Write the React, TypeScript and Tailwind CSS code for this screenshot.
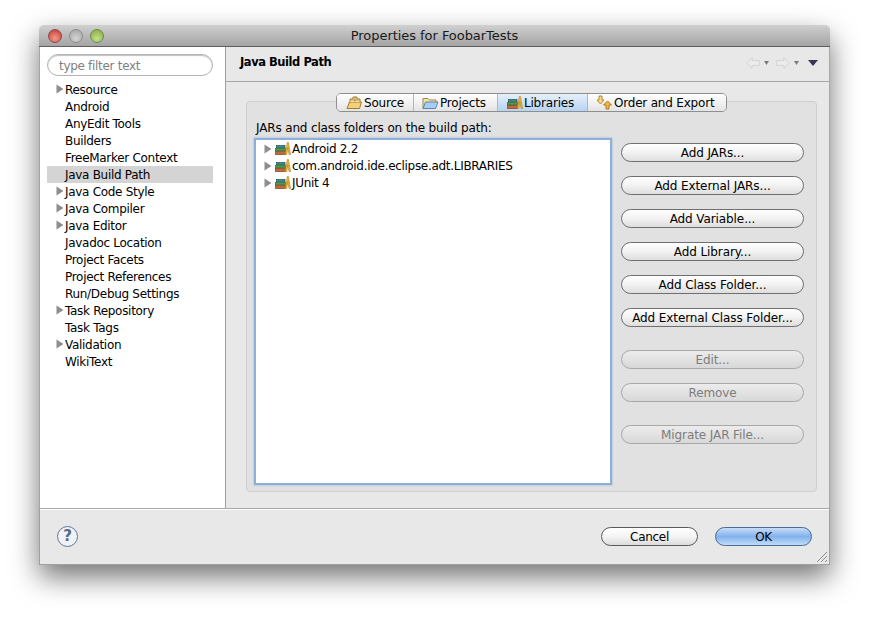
import React from 'react';

const sidebarItems = [
  { label: 'Resource', arrow: true },
  { label: 'Android' },
  { label: 'AnyEdit Tools' },
  { label: 'Builders' },
  { label: 'FreeMarker Context' },
  { label: 'Java Build Path', selected: true },
  { label: 'Java Code Style', arrow: true },
  { label: 'Java Compiler', arrow: true },
  { label: 'Java Editor', arrow: true },
  { label: 'Javadoc Location' },
  { label: 'Project Facets' },
  { label: 'Project References' },
  { label: 'Run/Debug Settings' },
  { label: 'Task Repository', arrow: true },
  { label: 'Task Tags' },
  { label: 'Validation', arrow: true },
  { label: 'WikiText' },
];

const Arrow = () => (
  <svg width="8" height="10" viewBox="0 0 8 10" className="shrink-0">
    <path d="M0.5 0.5 L7.5 5 L0.5 9.5 Z" fill="#8e8e8e" />
  </svg>
);

// stack of books with the yellow ruler leaning on it
const LibIcon = () => (
  <svg width="16" height="13" viewBox="0 0 16 13" className="shrink-0">
    <rect x="1.5" y="3.5" width="8.5" height="2.5" fill="#3f8a8f" stroke="#25505a" strokeWidth="0.7" />
    <rect x="0.5" y="6.5" width="10" height="2.5" fill="#4f9a48" stroke="#2e6e30" strokeWidth="0.7" />
    <rect x="0.5" y="9.5" width="10" height="3" fill="#c0693c" stroke="#80401f" strokeWidth="0.7" />
    <path d="M10.2 12.5 L12.3 0.5 L13.4 0.5 L15.6 12.5 L14 12.5 L12.8 5.5 L11.8 12.5 Z" fill="#f0c040" stroke="#a87a18" strokeWidth="0.6" />
  </svg>
);

const SourceIcon = () => (
  <svg width="17" height="14" viewBox="0 0 17 14" className="shrink-0">
    <path d="M1 12.5 L3.5 6 L15.5 6 L13.5 12.5 Z" fill="#f4d27a" stroke="#a47a2a" />
    <path d="M4 6 V3 H7 V1 H11 V3 H14 V6" fill="#f8e6b0" stroke="#a47a2a" />
    <path d="M9 1 V6 M5 4 H13" stroke="#a47a2a" strokeWidth="0.7" />
  </svg>
);

const FolderIcon = () => (
  <svg width="17" height="14" viewBox="0 0 17 14" className="shrink-0">
    <path d="M1 12.5 V2.5 H6 L7.5 4 H14 V6" fill="#f6e3a8" stroke="#9a8a50" />
    <path d="M1 12.5 L3.5 6 H16 L13.5 12.5 Z" fill="#a9cdee" stroke="#5a86b0" />
  </svg>
);

const OrderIcon = () => (
  <svg width="17" height="15" viewBox="0 0 17 15" className="shrink-0">
    <path d="M3 1 H6 V5 H8 L4.5 9 L1 5 H3 Z" fill="#f6dc8a" stroke="#b08a2a" />
    <path d="M10 14 H13 V10 H15.5 L11.5 6 L7.5 10 H10 Z" fill="#f2b44c" stroke="#b07a1a" />
  </svg>
);

const NavArrow = ({ flip }: { flip?: boolean }) => (
  <svg width="14" height="12" viewBox="0 0 14 12" className={flip ? 'rotate-180' : ''}>
    <path d="M0.7 6 L6 0.7 V3.5 H13.3 V8.5 H6 V11.3 Z" fill="#ececec" stroke="#d4d4d4" />
  </svg>
);

const SmallCaret = () => (
  <svg width="5" height="4" viewBox="0 0 5 4">
    <path d="M0 0 H5 L2.5 4 Z" fill="#7c7c7c" />
  </svg>
);

const Tab = ({ icon, label, className }: { icon: React.ReactNode; label: string; className: string }) => (
  <div className={`h-full shrink-0 flex items-center gap-px ${className}`}>
    {icon}
    <span className="tracking-[-0.2px]">{label}</span>
  </div>
);

const Button = ({ label, disabled, className = '' }: { label: string; disabled?: boolean; className?: string }) => (
  <div
    className={`w-[183px] h-[19px] shrink-0 rounded-full border flex items-center justify-center tracking-[-0.1px] ${
      disabled
        ? 'border-[#a8a8a8] bg-gradient-to-b from-[#ececec] to-[#d8d8d8] text-[#7d7d7d]'
        : 'border-[#6f6f6f] bg-gradient-to-b from-white via-[#f2f2f2] to-[#dedede] text-black'
    } ${className}`}
  >
    {label}
  </div>
);

const App = () => {
  return (
    <div
      className="w-[869px] h-[619px] bg-white overflow-hidden pt-[25px] pl-[39px] text-[12px] tracking-[-0.3px] text-black"
      style={{ fontFamily: '"DejaVu Sans", sans-serif' }}
    >
      <div className="w-[791px] h-[540px] flex flex-col rounded-t-[5px] shadow-[0_12px_28px_rgba(0,0,0,0.55)] bg-[#e8e8e8] relative">
        {/* title bar */}
        <div className="h-[22px] shrink-0 rounded-t-[5px] bg-gradient-to-b from-[#d0d0d0] to-[#a4a4a4] border-b border-[#5e5e5e] flex items-center relative text-[13px] tracking-[-0.05px] text-[#1a1a1a]">
          <div className="flex gap-[7px] pl-[9px]">
            <div className="w-[14px] h-[14px] rounded-full border border-[#8a4a4a] bg-[radial-gradient(circle_at_50%_70%,#f29a8e,#c4342c)]" />
            <div className="w-[14px] h-[14px] rounded-full border border-[#8c8c8c] bg-[radial-gradient(circle_at_50%_70%,#d4d4d4,#a2a2a2)]" />
            <div className="w-[14px] h-[14px] rounded-full border border-[#6f8a48] bg-[radial-gradient(circle_at_50%_70%,#c4e08c,#7fa83c)]" />
          </div>
          <div className="absolute inset-x-0 text-center">Properties for FoobarTests</div>
        </div>

        <div className="flex-1 flex min-h-0">
          {/* sidebar */}
          <div className="w-[187px] shrink-0 bg-white border-l border-[#a6a6a6] border-r border-r-[#a0a0a0] pl-[7px] pr-[12px] pt-[7px]">
            <div className="h-[22px] w-[166px] rounded-full border border-[#b4b4b4] shadow-[inset_0_1px_1px_rgba(0,0,0,0.25)] flex items-center pl-[11px] pt-px text-[#7f7f7f]">
              type filter text
            </div>
            <div className="mt-[5px] w-[166px]">
              {sidebarItems.map((item) => (
                <div
                  key={item.label}
                  className={`h-[17px] flex items-center relative pl-[18px] ${item.selected ? 'bg-[#d4d4d4]' : ''}`}
                >
                  {item.arrow && (
                    <span className="absolute left-[9px] top-[3px]">
                      <Arrow />
                    </span>
                  )}
                  {item.label}
                </div>
              ))}
            </div>
          </div>

          {/* right side */}
          <div className="flex-1 flex flex-col min-w-0 border-r border-[#a8a8a8]">
            <div className="h-[35px] shrink-0 border-b border-[#a8a8a8] shadow-[0_1px_0_#ffffff] flex items-center pl-[14px] pr-[11px] pb-[2px]">
              <span className="font-bold text-[11.5px] tracking-[-0.45px]">Java Build Path</span>
              <div className="ml-auto flex items-center">
                <NavArrow />
                <span className="ml-[4px]"><SmallCaret /></span>
                <span className="ml-[7px]"><NavArrow flip /></span>
                <span className="ml-[4px]"><SmallCaret /></span>
                <svg width="10" height="6" viewBox="0 0 10 6" className="ml-[9px]">
                  <path d="M0 0 H10 L5 6 Z" fill="#3c3458" />
                </svg>
              </div>
            </div>

            <div className="flex-1 pl-[20px] pr-[12px] pt-[19px] pb-[16px] bg-[#e8e8e8] flex flex-col min-h-0">
              <div className="flex-1 rounded-[4px] border border-[#cfcfcf] bg-[#e1e1e1] flex flex-col min-h-0">
                <div className="self-center -mt-[9px] h-[19px] flex items-center rounded-[5px] border border-[#8e8e8e] overflow-hidden">
                  <Tab
                    icon={<SourceIcon />}
                    label="Source"
                    className="w-[77px] pl-[9px] border-r border-[#b5b5b5] bg-gradient-to-b from-white to-[#e4e4e4]"
                  />
                  <Tab
                    icon={<FolderIcon />}
                    label="Projects"
                    className="w-[84px] pl-[8px] border-r border-[#b5b5b5] bg-gradient-to-b from-white to-[#e4e4e4]"
                  />
                  <Tab
                    icon={<LibIcon />}
                    label="Libraries"
                    className="w-[90px] pl-[9px] border-r border-[#9fb8d4] bg-gradient-to-b from-[#e6f0fb] to-[#b6d3f2]"
                  />
                  <Tab
                    icon={<OrderIcon />}
                    label="Order and Export"
                    className="w-[138px] pl-[8px] bg-gradient-to-b from-white to-[#e4e4e4]"
                  />
                </div>
                <div className="pl-[9px] mt-[8px] h-[17px] leading-[17px] tracking-[-0.15px]">JARs and class folders on the build path:</div>
                <div className="flex flex-1 min-h-0 pl-[7px] pr-[12px] pb-[6px] mt-px">
                  <div className="w-[358px] shrink-0 bg-white border-2 border-[#8db0da] shadow-[0_0_2px_#8db0da] pl-[8px]">
                    {['Android 2.2', 'com.android.ide.eclipse.adt.LIBRARIES', 'JUnit 4'].map((name) => (
                      <div key={name} className="h-[17px] flex items-center">
                        <Arrow />
                        <span className="ml-[3px] mr-px"><LibIcon /></span>
                        {name}
                      </div>
                    ))}
                  </div>
                  <div className="ml-[9px] flex flex-col pt-[5px]">
                    <Button label="Add JARs..." />
                    <Button label="Add External JARs..." className="mt-[14px]" />
                    <Button label="Add Variable..." className="mt-[14px]" />
                    <Button label="Add Library..." className="mt-[14px]" />
                    <Button label="Add Class Folder..." className="mt-[14px]" />
                    <Button label="Add External Class Folder..." className="mt-[14px]" />
                    <Button label="Edit..." disabled className="mt-[23px]" />
                    <Button label="Remove" disabled className="mt-[14px]" />
                    <Button label="Migrate JAR File..." disabled className="mt-[23px]" />
                  </div>
                </div>
              </div>
            </div>
          </div>
        </div>

        {/* footer */}
        <div className="h-[57px] shrink-0 border border-[#a0a0a0] border-t-[#a8a8a8] shadow-[inset_0_1px_0_#ffffff] bg-[#e8e8e8] flex items-center pl-[17px] pr-[17px] relative">
          <div className="w-[21px] h-[21px] rounded-full border border-[#5f7596] bg-[#f0f2f5] flex items-center justify-center font-bold text-[15px] text-[#55698c]">
            ?
          </div>
          <div className="ml-auto flex gap-[17px]">
            <div className="w-[97px] h-[19px] rounded-full border border-[#5a5a5a] bg-gradient-to-b from-white via-[#f4f4f4] to-[#dcdcdc] flex items-center justify-center">
              Cancel
            </div>
            <div className="w-[97px] h-[19px] rounded-full border border-[#4a6a98] bg-gradient-to-b from-[#c8dcf6] via-[#82b2ec] to-[#c0dcf8] flex items-center justify-center">
              OK
            </div>
          </div>
          <svg width="12" height="12" viewBox="0 0 12 12" className="absolute right-px bottom-px">
            <path d="M1 11 L11 1 M5 11 L11 5 M9 11 L11 9" stroke="#8f8f8f" />
          </svg>
        </div>
      </div>
    </div>
  );
};

export default App;
